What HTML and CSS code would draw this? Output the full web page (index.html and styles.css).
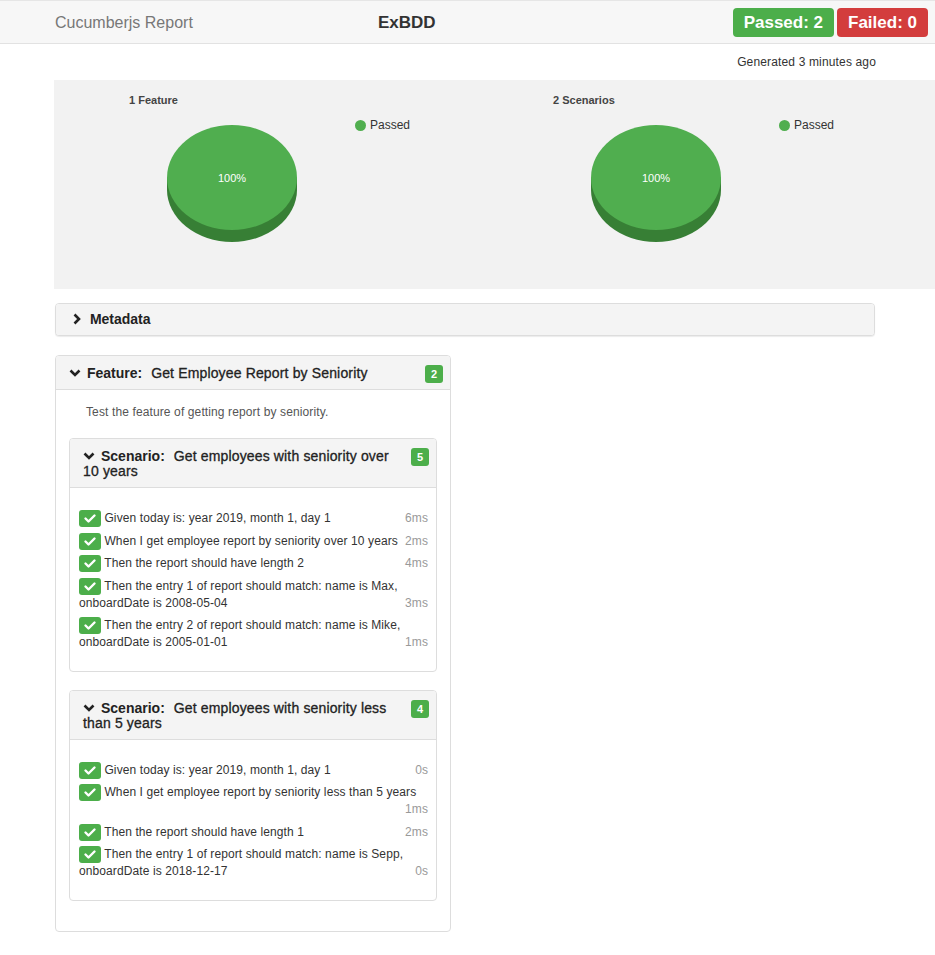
FILE: index.html
```html
<!DOCTYPE html>
<html lang="en">
<head>
    <meta charset="UTF-8">
    <meta name="viewport" content="width=device-width, initial-scale=1.0">
    <title>Cucumberjs Report - ExBDD</title>
    <link rel="stylesheet" href="styles.css">
</head>
<body>
    <header class="navbar">
        <span class="brand">Cucumberjs Report</span>
        <span class="project">ExBDD</span>
        <div class="totals">
            <span class="total passed">Passed: 2</span>
            <span class="total failed">Failed: 0</span>
        </div>
    </header>

    <p class="generated">Generated 3 minutes ago</p>

    <section class="summary">
        <div class="chart">
            <h3>1 Feature</h3>
            <div class="chart-body">
                <svg class="pie" width="130" height="118" viewBox="0 0 130 118">
                    <ellipse cx="65" cy="64.5" rx="65" ry="52.5" fill="#377f35"/>
                    <rect x="0" y="52.5" width="130" height="12" fill="#377f35"/>
                    <ellipse cx="65" cy="52.5" rx="65" ry="52.5" fill="#50ae4f"/>
                    <text x="65" y="56.5" text-anchor="middle">100%</text>
                </svg>
                <div class="legend"><span class="dot"></span>Passed</div>
            </div>
        </div>
        <div class="chart">
            <h3>2 Scenarios</h3>
            <div class="chart-body">
                <svg class="pie" width="130" height="118" viewBox="0 0 130 118">
                    <ellipse cx="65" cy="64.5" rx="65" ry="52.5" fill="#377f35"/>
                    <rect x="0" y="52.5" width="130" height="12" fill="#377f35"/>
                    <ellipse cx="65" cy="52.5" rx="65" ry="52.5" fill="#50ae4f"/>
                    <text x="65" y="56.5" text-anchor="middle">100%</text>
                </svg>
                <div class="legend"><span class="dot"></span>Passed</div>
            </div>
        </div>
    </section>

    <div class="content">
        <div class="panel metadata">
            <div class="panel-heading">
                <svg class="chevron-right" width="8" height="12" viewBox="0 0 8 12"><polyline points="1.5,1.5 6,6 1.5,10.5"/></svg>
                Metadata
            </div>
        </div>

        <div class="panel feature">
            <div class="panel-heading">
                <span class="count">2</span>
                <h4><svg class="chevron-down" width="12" height="8" viewBox="0 0 12 8"><polyline points="1.5,1.5 6,6 10.5,1.5"/></svg><b>Feature:</b> <span class="name">Get Employee Report by Seniority</span></h4>
            </div>
            <div class="panel-body">
                <p class="description">Test the feature of getting report by seniority.</p>

                <div class="panel scenario">
                    <div class="panel-heading">
                        <span class="count">5</span>
                        <h4><svg class="chevron-down" width="12" height="8" viewBox="0 0 12 8"><polyline points="1.5,1.5 6,6 10.5,1.5"/></svg><b>Scenario:</b> <span class="name">Get employees with seniority over 10 years</span></h4>
                    </div>
                    <div class="panel-body">
                        <div class="step"><span class="check"><svg width="22" height="17" viewBox="0 0 22 17"><polyline points="6.5,8.5 9.5,11.5 15.5,5.5"/></svg></span> Given today is: year 2019, month 1, day 1 <span class="duration">6ms</span></div>
                        <div class="step"><span class="check"><svg width="22" height="17" viewBox="0 0 22 17"><polyline points="6.5,8.5 9.5,11.5 15.5,5.5"/></svg></span> When I get employee report by seniority over 10 years <span class="duration">2ms</span></div>
                        <div class="step"><span class="check"><svg width="22" height="17" viewBox="0 0 22 17"><polyline points="6.5,8.5 9.5,11.5 15.5,5.5"/></svg></span> Then the report should have length 2 <span class="duration">4ms</span></div>
                        <div class="step"><span class="check"><svg width="22" height="17" viewBox="0 0 22 17"><polyline points="6.5,8.5 9.5,11.5 15.5,5.5"/></svg></span> Then the entry 1 of report should match: name is Max, onboardDate is 2008-05-04 <span class="duration">3ms</span></div>
                        <div class="step"><span class="check"><svg width="22" height="17" viewBox="0 0 22 17"><polyline points="6.5,8.5 9.5,11.5 15.5,5.5"/></svg></span> Then the entry 2 of report should match: name is Mike, onboardDate is 2005-01-01 <span class="duration">1ms</span></div>
                    </div>
                </div>

                <div class="panel scenario">
                    <div class="panel-heading">
                        <span class="count">4</span>
                        <h4><svg class="chevron-down" width="12" height="8" viewBox="0 0 12 8"><polyline points="1.5,1.5 6,6 10.5,1.5"/></svg><b>Scenario:</b> <span class="name">Get employees with seniority less than 5 years</span></h4>
                    </div>
                    <div class="panel-body">
                        <div class="step"><span class="check"><svg width="22" height="17" viewBox="0 0 22 17"><polyline points="6.5,8.5 9.5,11.5 15.5,5.5"/></svg></span> Given today is: year 2019, month 1, day 1 <span class="duration">0s</span></div>
                        <div class="step"><span class="check"><svg width="22" height="17" viewBox="0 0 22 17"><polyline points="6.5,8.5 9.5,11.5 15.5,5.5"/></svg></span> When I get employee report by seniority less than 5 years <span class="duration">1ms</span></div>
                        <div class="step"><span class="check"><svg width="22" height="17" viewBox="0 0 22 17"><polyline points="6.5,8.5 9.5,11.5 15.5,5.5"/></svg></span> Then the report should have length 1 <span class="duration">2ms</span></div>
                        <div class="step"><span class="check"><svg width="22" height="17" viewBox="0 0 22 17"><polyline points="6.5,8.5 9.5,11.5 15.5,5.5"/></svg></span> Then the entry 1 of report should match: name is Sepp, onboardDate is 2018-12-17 <span class="duration">0s</span></div>
                    </div>
                </div>
            </div>
        </div>
    </div>
</body>
</html>
```

FILE: styles.css
```css
body {
    margin: 0;
    font-family: "Liberation Sans", Arial, sans-serif;
    font-size: 12px;
    line-height: 17px;
    color: #333;
    background: #fff;
}

/* top bar */
.navbar {
    display: flex;
    align-items: center;
    height: 42px;
    padding: 0 7px 0 55px;
    background: #f7f7f7;
    border-top: 1px solid #e6e6e6;
    border-bottom: 1px solid #e2e2e2;
}
.brand {
    flex: 0 0 323px;
    font-size: 16px;
    color: #777;
}
.project {
    font-size: 17px;
    font-weight: bold;
    color: #333;
}
.totals {
    margin-left: auto;
    display: flex;
    gap: 3px;
}
.total {
    height: 29px;
    line-height: 29px;
    padding: 0 11px;
    border-radius: 4px;
    color: white;
    font-size: 17px;
    font-weight: bold;
}
.passed {
    background: #4cae4a;
}
.failed {
    background: #d33d3d;
}

.generated {
    margin: 10px 59px 9px 0;
    text-align: right;
    letter-spacing: 0.15px;
}

/* charts */
.summary {
    margin-left: 54px;
    height: 209px;
    background: #f2f2f2;
    display: grid;
    grid-template-columns: 424px 424px;
}
.chart {
    padding: 14px 0 0 75px;
}
.chart h3 {
    margin: 0;
    font-size: 11px;
    line-height: 13px;
    font-weight: bold;
    color: #444;
}
.chart-body {
    display: flex;
    align-items: flex-start;
    margin-top: 18px;
    padding-left: 38px;
}
.pie {
    display: block;
    flex: none;
}
.pie text {
    fill: #fff;
    font-size: 11px;
    font-family: "Liberation Sans", Arial, sans-serif;
}
.legend {
    display: flex;
    align-items: center;
    gap: 4px;
    margin: -6px 0 0 58px;
    font-size: 12px;
    line-height: 13px;
}
.dot {
    width: 11px;
    height: 11px;
    border-radius: 50%;
    background: #50ae4f;
}

/* panels */
.content {
    margin: 14px 60px 0 55px;
}
.panel {
    border: 1px solid #ddd;
    border-radius: 4px;
    background: #fff;
}
.panel-heading {
    background: #f4f4f4;
    border-radius: 3px 3px 0 0;
}
.panel h4 {
    margin: 0;
    font-size: 14px;
    line-height: 15px;
    font-weight: normal;
    color: #222;
}
.panel h4 b {
    margin-right: 5px;
}
.panel h4 .name {
    letter-spacing: 0.15px;
    -webkit-text-stroke: 0.3px #222;
}
.chevron-down, .chevron-right {
    fill: none;
    stroke: #222;
    stroke-width: 2.6;
}
.chevron-down {
    margin-right: 6px;
    vertical-align: 1px;
}

.metadata {
    margin-bottom: 19px;
    box-shadow: 0 1px 1px rgba(0, 0, 0, 0.08);
}
.metadata .panel-heading {
    padding: 8px 17px;
    font-size: 14px;
    line-height: 15px;
    font-weight: bold;
    color: #222;
    border-radius: 3px;
}
.chevron-right {
    margin-right: 5px;
    vertical-align: -1px;
}

.feature {
    width: 396px;
    box-sizing: border-box;
}
.feature > .panel-heading,
.scenario > .panel-heading {
    padding: 10px 7px 8px 13px;
    border-bottom: 1px solid #ddd;
}
.feature > .panel-body {
    padding: 14px 13px 12px;
}
.count {
    float: right;
    width: 18px;
    height: 18px;
    line-height: 18px;
    margin: -1px 0 0 10px;
    text-align: center;
    border-radius: 3px;
    background: #4cae4a;
    color: white;
    font-size: 11px;
    font-weight: bold;
}
.description {
    margin: 0 0 17px;
    padding-left: 17px;
    color: #555;
    letter-spacing: 0.12px;
}

.scenario {
    margin-bottom: 18px;
}
.scenario > .panel-body {
    padding: 22px 8px 14px 9px;
}
.step {
    display: flow-root;
    margin-bottom: 5.5px;
    letter-spacing: 0.1px;
}
.check {
    display: inline-block;
    width: 22px;
    height: 17px;
    vertical-align: top;
    border-radius: 3px;
    background: #4cae4a;
}
.check svg {
    display: block;
    fill: none;
    stroke: white;
    stroke-width: 2.4;
    stroke-linecap: round;
    stroke-linejoin: round;
}
.duration {
    float: right;
    color: #999;
}
```
